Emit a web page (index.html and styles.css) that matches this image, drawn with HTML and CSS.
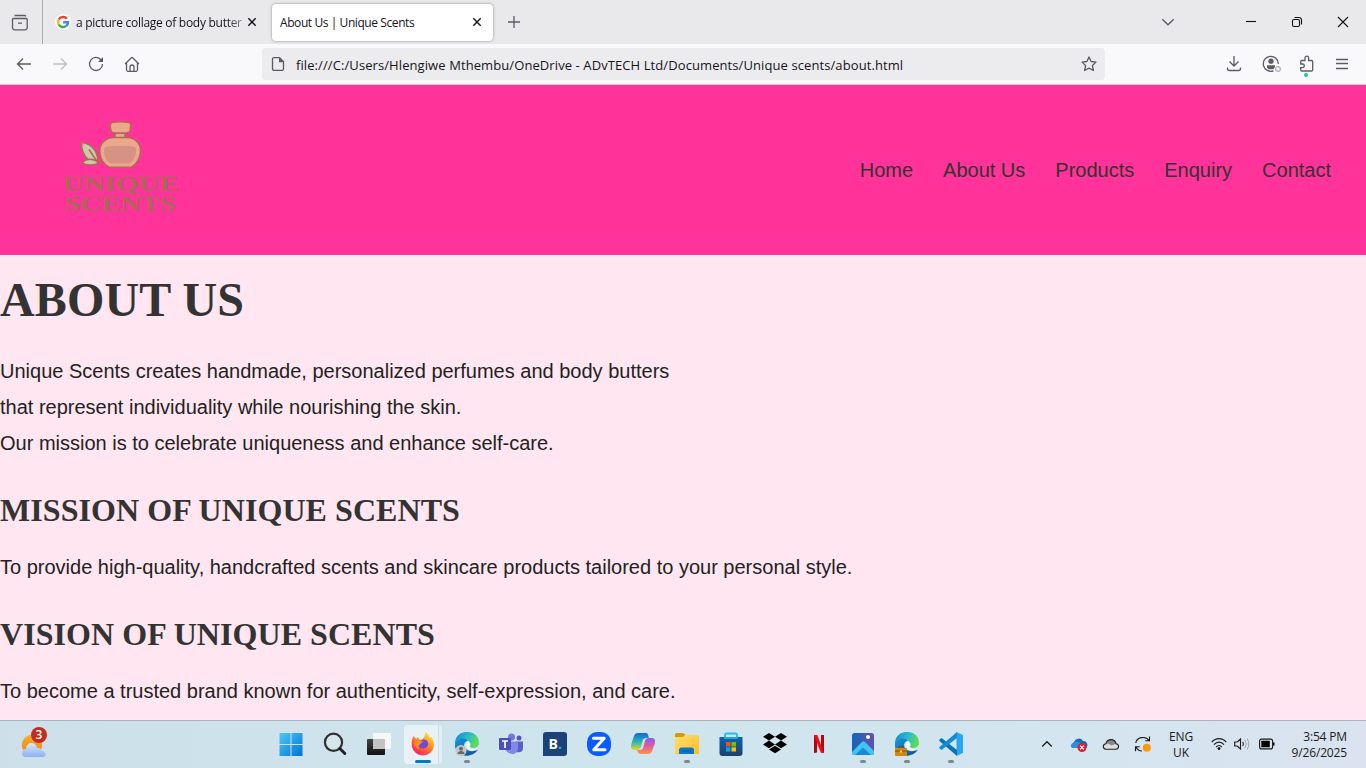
FILE: index.html
```html
<!DOCTYPE html>
<html lang="en">
<head>
<meta charset="utf-8">
<title>About Us | Unique Scents</title>
<link rel="stylesheet" href="styles.css">
</head>
<body>
<div class="screen">
  <div class="tabbar">
    <div class="recent"><svg class="ico" width="18" height="18" viewBox="0 0 18 18"><path d="M3.500 1.500h10.600l.8.900M2.500 4.500h12.700a1.100 1.100 0 0 1 1 1.100v7.900a2.200 2.200 0 0 1-2.200 2.300H3.700a2.200 2.200 0 0 1-2.200-2.300V5.600a1.100 1.100 0 0 1 1-1.100zM7 9.200h4"/></svg></div>
    <div class="tab idle">
      <svg class="fav" width="16" height="16" viewBox="0 0 16 16"><circle cx="8" cy="8" r="8" fill="#fff"/><g fill="none" stroke-width="2.500"><path d="M3.700 5.500A5 5 0 0 1 11.900 4.700" stroke="#ea4335"/><path d="M3.700 5.500a5 5 0 0 0 0 5" stroke="#fbbc05"/><path d="M3.700 10.500a5 5 0 0 0 7.600 1.400" stroke="#34a853"/><path d="M11.300 11.900A5 5 0 0 0 13 8.200H8.200" stroke="#4285f4"/></g></svg>
      <span class="tab-title faded">a picture collage of body butter</span>
      <svg class="x" width="10" height="10" viewBox="0 0 10 10"><path d="M1.300 1.300l7.400 7.400M8.700 1.300L1.300 8.700"/></svg>
    </div>
    <div class="tab active">
      <span class="tab-title">About Us | Unique Scents</span>
      <svg class="x" width="10" height="10" viewBox="0 0 10 10"><path d="M1.300 1.300l7.400 7.400M8.700 1.300L1.300 8.700"/></svg>
    </div>
    <svg class="ico plus" width="14" height="14" viewBox="0 0 14 14"><path d="M7 1v12M1 7h12"/></svg>
    <div class="winctl">
      <svg class="ico" width="14" height="14" viewBox="0 0 14 14"><path d="M1.300 4.200L7 9.800l5.700-5.600"/></svg>
      <svg class="ctl" width="12" height="12" viewBox="0 0 12 12"><path d="M1 5.500h10"/></svg>
      <svg class="ctl" width="12" height="12" viewBox="0 0 12 12"><rect x="1.500" y="3.500" width="7" height="7" rx="1.500"/><path d="M3.500 1.500H8a2.500 2.500 0 0 1 2.500 2.500v4.500"/></svg>
      <svg class="ctl" width="12" height="12" viewBox="0 0 12 12"><path d="M1 1l10 10M11 1L1 11"/></svg>
    </div>
  </div>

  <div class="toolbar">
    <div class="navbtns">
      <svg class="ico" width="16" height="16" viewBox="0 0 16 16"><path d="M15 8H1.500M7 2.500L1.500 8 7 13.500"/></svg>
      <svg class="ico off" width="16" height="16" viewBox="0 0 16 16"><path d="M1 8h13.500M9 2.500L14.500 8 9 13.500"/></svg>
      <svg class="ico" width="16" height="16" viewBox="0 0 16 16"><path d="M13.300 4.200A6.500 6.500 0 1 0 14.500 8"/><path d="M15 1v5H10z" fill="#5b5b66" stroke="none"/></svg>
      <svg class="ico" width="16" height="16" viewBox="0 0 16 16"><path d="M1 8l6.400-6.300a.9.900 0 0 1 1.200 0L15 8M2.500 7v6.800a1.500 1.500 0 0 0 1.500 1.500h8a1.500 1.500 0 0 0 1.500-1.500V7M6 15v-4a2 2 0 0 1 4 0v4"/></svg>
    </div>
    <div class="urlbar">
      <svg class="ico" width="14" height="16" viewBox="0 0 14 16"><path d="M3 1.600h5.500l4 4v7.300a1.500 1.500 0 0 1-1.500 1.500H3a1.500 1.500 0 0 1-1.500-1.500V3.100A1.500 1.500 0 0 1 3 1.600z"/><path d="M8 1.500v4.800h4.800z" fill="#5b5b66" stroke="none"/></svg>
      <span class="url">file:///C:/Users/Hlengiwe Mthembu/OneDrive - ADvTECH Ltd/Documents/Unique scents/about.html</span>
      <svg class="ico star" width="16" height="16" viewBox="0 0 16 16"><path d="M8 1l2.100 4.500 4.900.6-3.600 3.400 1 5L8 12.100l-4.400 2.400 1-5L1 6.100l4.900-.6z" stroke-linejoin="round"/></svg>
    </div>
    <div class="tools">
      <svg class="ico" width="16" height="16" viewBox="0 0 16 16"><path d="M8 0v10M3.500 5.500L8 10l4.500-4.500M1.500 11.500v1a2 2 0 0 0 2 2h9a2 2 0 0 0 2-2v-1"/></svg>
      <svg class="ico" width="20" height="18" viewBox="0 0 20 18"><path d="M11.500 15.800A7.500 7.500 0 1 1 16.300 9"/><circle cx="9" cy="6.200" r="2.600" fill="#5b5b66" stroke="none"/><path d="M5 10.200h8v1.500l-1.500 2.500H6.500L5 12.500z" fill="#5b5b66" stroke="none"/><circle cx="16" cy="14" r="2.300" stroke="#b0b0b6"/></svg>
      <svg class="ico" width="16" height="22" viewBox="0 0 16 22"><path d="M1.700 9V6.700A1.200 1.200 0 0 1 2.900 5.500H6V3a1.800 1.800 0 0 1 3.600 0v2.500h2.900a1.200 1.200 0 0 1 1.200 1.200v8.100a1.200 1.200 0 0 1-1.200 1.200H2.900a1.200 1.200 0 0 1-1.200-1.200V12.600h1.800a1.800 1.800 0 0 0 0-3.600z"/><circle cx="7" cy="21" r="0" /><circle cx="7" cy="20" r="2" fill="#20c39c" stroke="none"/></svg>
      <svg class="ico" width="14" height="14" viewBox="0 0 14 14"><path d="M1 2.500h12M1 6.500h12M1 11.500h12"/></svg>
    </div>
  </div>

  <main class="page">
    <header class="site-header">
      <svg class="logo" width="130" height="106" viewBox="0 0 130 106">
        <g stroke="#b06a52" stroke-width="1.500">
          <path d="M41 43.500C30 42 24 34 24.800 22.500 35 24 41 31 41 43.500z" fill="#cbc8ae"/>
          <path d="M25 42.500c5-4.500 12-4 17 .3-5 3-13 3-17-.3z" fill="#cbc8ae"/>
          <path d="M32 29.500l9 13.500 3 0" fill="none"/>
          <path d="M58 13h10v6H58z" fill="#eca88d"/>
          <path d="M55 2.500c6-1 11-1 17 0 1.500.5 2 2 1.600 4L73 11c-.5 1.500-2 2-4 2H58c-2 0-3.500-.5-4-2L53.300 6.500c-.3-2 .2-3.500 1.700-4z" fill="#eca88d"/>
          <path d="M57 17.500h13c8 0 14 6 13.500 14C83 40 77 47.300 72 47.300H54.500C49 47.300 43 40 42.700 31.500c-.2-8 6-14 14.300-14z" fill="#eca88d"/>
        </g>
        <path d="M50 26.500q13-1.500 26 0 3.500.5 3 5C78.500 38 75 43.500 71 43.500H55.500C51 43.500 47.500 38 47 31.500q-.2-4.500 3-5z" fill="#d69282"/>
        <g class="logo-text"><text x="6" y="70.500" textLength="116" lengthAdjust="spacingAndGlyphs">UNIQUE</text><text x="8" y="91" textLength="111" lengthAdjust="spacingAndGlyphs">SCENTS</text></g>
      </svg>
      <nav class="site-nav"><a>Home</a><a>About Us</a><a>Products</a><a>Enquiry</a><a>Contact</a></nav>
    </header>
    <h1>ABOUT US</h1>
    <p>Unique Scents creates handmade, personalized perfumes and body butters<br>that represent individuality while nourishing the skin.<br>Our mission is to celebrate uniqueness and enhance self-care.</p>
    <h2>MISSION OF UNIQUE SCENTS</h2>
    <p>To provide high-quality, handcrafted scents and skincare products tailored to your personal style.</p>
    <h2>VISION OF UNIQUE SCENTS</h2>
    <p>To become a trusted brand known for authenticity, self-expression, and care.</p>
  </main>

  <footer class="taskbar">
    <svg width="0" height="0" class="defs"><defs>
      <linearGradient id="win" x2="1" y2="1"><stop stop-color="#4cc9fb"/><stop offset="1" stop-color="#0073d1"/></linearGradient>
      <linearGradient id="sun" x2="0" y2="1"><stop stop-color="#eab32a"/><stop offset="1" stop-color="#f77b16"/></linearGradient>
      <linearGradient id="cloud" x2="0" y2="1"><stop stop-color="#d8e7fc"/><stop offset="1" stop-color="#8db2ee"/></linearGradient>
      <linearGradient id="fox" x1=".8" y1="0" x2=".2" y2="1"><stop stop-color="#fff044"/><stop offset=".45" stop-color="#ff8a22"/><stop offset="1" stop-color="#f5156c"/></linearGradient>
      <linearGradient id="edge" x2="1" y2=".3"><stop stop-color="#1686d0"/><stop offset=".55" stop-color="#28b9d0"/><stop offset="1" stop-color="#5ddd56"/></linearGradient>
      <linearGradient id="edge2" x2="1" y2="1"><stop stop-color="#1796dc"/><stop offset="1" stop-color="#0b4b98"/></linearGradient>
      <linearGradient id="cop1" x2="0" y2="1"><stop stop-color="#1765d8"/><stop offset=".5" stop-color="#25b5bb"/><stop offset="1" stop-color="#e6d527"/></linearGradient>
      <linearGradient id="cop2" x2="0" y2="1"><stop stop-color="#8c59ee"/><stop offset=".5" stop-color="#e35aa0"/><stop offset="1" stop-color="#ff9248"/></linearGradient>
      <linearGradient id="fold" x2="1" y2="1"><stop stop-color="#ffdf72"/><stop offset="1" stop-color="#fdbd22"/></linearGradient>
      <linearGradient id="store" x2="0" y2="1"><stop stop-color="#0868ad"/><stop offset="1" stop-color="#213e69"/></linearGradient>
      <linearGradient id="photo" x2="1"><stop stop-color="#1365b8"/><stop offset="1" stop-color="#654fb2"/></linearGradient>
      <linearGradient id="dark" x2="0" y2="1"><stop stop-color="#444"/><stop offset="1" stop-color="#111"/></linearGradient>
    </defs></svg>
    <div class="weather"><svg width="30" height="36" viewBox="0 0 30 36"><circle cx="12" cy="20" r="10.200" fill="url(#sun)"/><path d="M6 32a3.500 3.500 0 0 1 0-8 5.500 5.500 0 0 1 11-1 4 4 0 0 1 5 3 3 3 0 0 1 1 6z" fill="url(#cloud)"/><circle cx="19" cy="10" r="8" fill="#c42b1c"/><text x="19" y="14.200" text-anchor="middle" class="badge">3</text></svg></div>
    <div class="apps">
      <span class="app"><svg viewBox="0 0 24 24"><path fill="url(#win)" d="M.5 1h11v11H.5zM12.500 1h11v11h-11zM.5 13h11v11H.5zM12.500 13h11v11h-11z"/></svg></span>
      <span class="app"><svg viewBox="0 0 24 24"><circle cx="10.500" cy="10.300" r="8.600" fill="#dce9ed" fill-opacity=".5" stroke="#303030" stroke-width="2.200"/><path d="M16.800 16.500l5 5" stroke="#222" stroke-width="3" stroke-linecap="round"/></svg></span>
      <span class="app"><svg viewBox="0 0 24 24"><rect y="7" width="18" height="16" rx="1" fill="url(#dark)"/><rect x="6" y="1" width="18" height="16" rx="1" fill="#f7f7f7"/><path d="M6 7h12v10H6z" fill="#c3c3c3"/></svg></span>
      <span class="app current"><svg viewBox="0 0 24 24"><path d="M2.500 4l2.700 3 2-2 .6 2.500 3 .3C13 6 14 3.500 14.500 0c3 2 4 4 4.300 6l1.700-1c3 5 3.300 9.500.7 13.500-4.500 6.500-14 6.500-18.500 0C-.5 14 .5 8 2.500 4z" fill="url(#fox)"/><path d="M8 9l4-1.500c4-.5 6 3 4.800 6-1.500 4-8 4-9.300 0-.5-2 0-3.500.5-4.500z" fill="#704bd1"/><path d="M4 8l4-.5 4 2.200-3 2.600c-1.500 1-2 3-.8 5C4 16 2.500 12 4 8z" fill="#ff8b20"/></svg></span>
      <span class="app run"><svg viewBox="0 0 24 24"><path d="M0 12C-.5-4 24-4 24 11c0 5-6 6-9 4 2-3-1-7-5-7-5 0-9 4-9 9-1-1-1-3-1-5z" fill="url(#edge)"/><path d="M0 12c1-5 9-8 13-3-5 0-6 8 2 10 3 .8 6-.4 8-1.500C17 27 0 26 0 12z" fill="url(#edge2)"/><path d="M13 9c2.500 2 2 5 1 6.500 2 2 6 2 8.500 0 0 2-6 4-9 2-2.500-2-3-6-.5-8.500z" fill="#eef8f8"/><circle cx="6" cy="18.500" r="5.500" fill="#c7c7c5"/><circle cx="6" cy="16.700" r="2" fill="#686868"/><path d="M2.500 22c0-4 7-4 7 0z" fill="#686868"/></svg></span>
      <span class="app"><svg viewBox="0 0 24 24"><circle cx="12.500" cy="5" r="3.500" fill="#7278dc"/><circle cx="20" cy="6" r="2.500" fill="#5558bd"/><path d="M17 9.500h7V16c0 4-3 5-7 4z" fill="#5b5fc7"/><path d="M6 9.500h13V16c0 8-11 8-13 0z" fill="#8287ea"/><rect y="6" width="12" height="12" rx="1" fill="#4b4fbc"/><path d="M3 9h6M6 9v7" stroke="#fff" stroke-width="1.700"/></svg></span>
      <span class="app"><svg viewBox="0 0 24 24"><path d="M3 0h18q3 0 3 3v18q0 3-3 3H0V3q0-3 3-3z" fill="#1b4379"/><text x="5.500" y="17.300" class="book">B<tspan fill="#1fb4e8">.</tspan></text></svg></span>
      <span class="app"><svg viewBox="0 0 24 24"><rect width="24" height="24" rx="10" fill="#0b5cff"/><path d="M6.500 6.200h10.700L6.800 17.800H18" fill="none" stroke="#fff" stroke-width="3" stroke-linecap="round" stroke-linejoin="round"/></svg></span>
      <span class="app"><svg viewBox="0 0 24 24"><path d="M7 1h8c2 0 2 2 3 5h-3c-2 0-3 1-3.600 4l-1.400 5c-.5 2-2 3-4 3H3c-3 0-3.500-3-2.700-6L3 4c.7-2 2-3 4-3z" fill="url(#cop1)"/><path d="M17 22H9.500c-2 0-2.500-2-3.500-4h3c2 0 3-1 3.600-4L14 9c.5-2 1.500-3 4-3h3c3 0 3.500 3 2.700 6L21 19c-.7 2-2 3-4 3z" fill="url(#cop2)"/></svg></span>
      <span class="app run"><svg viewBox="0 0 24 24"><path d="M0 3q0-2 2-2h6l3 2v4H0z" fill="#d99a08"/><path d="M0 5h8l2-2h12q2 0 2 2v17H0z" fill="url(#fold)"/><path d="M4 22v-4q0-2.500 2.500-2.500h10Q19 15.500 19 18v4z" fill="#0877c5"/><path d="M7 19h9" stroke="#075b9c"/></svg></span>
      <span class="app"><svg viewBox="0 0 24 24"><path d="M6 7V3q0-1.500 1.500-1.500h9Q18 1.500 18 3v4" fill="none" stroke="#29b8ef" stroke-width="1.800"/><path d="M.5 5h23v16q0 3-3 3h-17q-3 0-3-3z" fill="url(#store)"/><path d="M6 3v3h12V3" fill="none" stroke="#29b8ef" stroke-width="1.500"/><path d="M7 10h4.500v4.500H7z" fill="#f25022"/><path d="M12.500 10H17v4.500h-4.500z" fill="#7fba00"/><path d="M7 15.300h4.500v4.200H7z" fill="#00a4ef"/><path d="M12.500 15.300H17v4.200h-4.500z" fill="#ffb900"/></svg></span>
      <span class="app"><svg viewBox="0 0 24 24"><path d="M6 1l6 3.800-6 3.800L0 4.800zM18 1l6 3.800-6 3.800-6-3.800zM6 8.600l6 3.800-6 3.800-6-3.800zM18 8.600l6 3.800-6 3.800-6-3.800zM12 13.800l6 3.700-6 3.700-6-3.700z" fill="#000"/></svg></span>
      <span class="app"><svg viewBox="0 0 24 24"><path d="M7 3h3v17.500l-3 .5zM14 3h3v18l-3-.5z" fill="#b1060f"/><path d="M7 3h3.300L17 21l-3.300-.4z" fill="#ef0a18"/></svg></span>
      <span class="app run"><svg viewBox="0 0 24 24"><rect x="1" y="1" width="22" height="22" rx="2.500" fill="url(#photo)"/><path d="M1 20L11 10q1.500-1.500 3 0l9 9v2q0 2-2 2H3q-2 0-2-2z" fill="#42c3f5"/><path d="M4 23l8-7.500L20 23z" fill="#168bd2"/><circle cx="17" cy="5" r="2" fill="#fff"/></svg></span>
      <span class="app run"><svg viewBox="0 0 24 24"><path d="M0 12C-.5-4 24-4 24 11c0 5-6 6-9 4 2-3-1-7-5-7-5 0-9 4-9 9-1-1-1-3-1-5z" fill="url(#edge)"/><path d="M0 12c1-5 9-8 13-3-5 0-6 8 2 10 3 .8 6-.4 8-1.500C17 27 0 26 0 12z" fill="url(#edge2)"/><path d="M13 9c2.500 2 2 5 1 6.500 2 2 6 2 8.500 0 0 2-6 4-9 2-2.500-2-3-6-.5-8.500z" fill="#eef8f8"/><path d="M4 16v-1.500h4V16" fill="none" stroke="#7c4608"/><rect y="16" width="12" height="8" rx="1" fill="#d58512"/><path d="M0 19h12" stroke="#8a4b05"/><path d="M5 18.500h2v2H5z" fill="#ffd44d"/></svg></span>
      <span class="app run"><svg viewBox="0 0 24 24"><path d="M17.500 0L24 3v18l-6.500 3z" fill="#29a6f2"/><path d="M0 8l2.500-2L18 18v6L1 9.500z" fill="#0873b9"/><path d="M0 16l2.500 2L18 6V0L1 14.500z" fill="#168bd3"/></svg></span>
    </div>
    <div class="tray">
      <svg class="t-up" width="12" height="12" viewBox="0 0 12 12"><path d="M1.200 8.500L6 3.700l4.800 4.800" fill="none" stroke="#1b1b1b" stroke-width="1.300"/></svg>
      <svg class="t-drive" width="18" height="16" viewBox="0 0 18 16"><path d="M4 11a3.500 3.500 0 0 1 0-6 5 5 0 0 1 9-1 4 4 0 0 1 3 7z" fill="#1268bf"/><path d="M2 11c-2-2-1-5 2-5 2-2 5-2 6.500 1L14 11z" fill="#2491e4"/><circle cx="12" cy="10.500" r="4.500" fill="#d92334"/><path d="M10.200 8.700l3.600 3.600m0-3.600l-3.600 3.600" stroke="#fff" stroke-width="1.200"/></svg>
      <svg class="t-cloud" width="18" height="14" viewBox="0 0 18 14"><path d="M4 12.300C.5 12 .3 7 4 6.700c1-5.500 9-5.500 10 0 3.500.3 3.300 5.300 0 5.600z" fill="#dedede"/><path d="M4 6.700c1-5.500 9-5.500 10 0L9.500 8.500 6 6.500z" fill="#888"/><path d="M4 12.300C.5 12 .3 7 4 6.700c1-5.500 9-5.500 10 0 3.500.3 3.300 5.300 0 5.600z" fill="none" stroke="#222" stroke-width="1.100"/></svg>
      <svg class="t-sync" width="18" height="18" viewBox="0 0 18 18"><path d="M1.800 8C2.500 2 11.500.5 15 5.500M15.500 1.500v4.300h-4.300M1.500 16.200v-4.500h4.300M2 12q2 4 6 4" fill="none" stroke="#1b1b1b" stroke-width="1.100"/><circle cx="12.800" cy="12.800" r="4" fill="#ff980e"/></svg>
      <div class="lang">ENG<br>UK</div>
      <svg class="t-wifi" width="16" height="14" viewBox="0 0 16 14"><path d="M.8 5.200c4-4.700 10.400-4.700 14.400 0M3 7.700c3-3.500 7-3.500 10 0M5.200 10c1.800-2 3.800-2 5.600 0" fill="none" stroke="#1b1b1b" stroke-width="1.200"/><circle cx="8" cy="11.600" r="1.400"/></svg>
      <svg class="t-sound" width="16" height="14" viewBox="0 0 16 14"><path d="M.7 5h2.500L6.500 2v10L3.200 9H.7zM8.700 5q1.500 2 0 4" fill="none" stroke="#1b1b1b" stroke-width="1.100"/><path d="M10.800 3q3 4 0 8M13 1.500q3.700 5.500 0 11" fill="none" stroke="#9ca9b1"/></svg>
      <svg class="t-bat" width="16" height="12" viewBox="0 0 16 12"><rect x=".6" y="1.100" width="13" height="9.800" rx="2" fill="none" stroke="#1b1b1b" stroke-width="1.100"/><rect x="2.300" y="2.800" width="8.500" height="6.400" rx=".5"/><path d="M14 4.500h1.500v3H14z"/></svg>
      <div class="clock">3:54 PM<br>9/26/2025</div>
    </div>
  </footer>
</div>
</body>
</html>
```
FILE: styles.css
```css
* { box-sizing: border-box; }
body { margin: 0; }
svg { display: block; flex: none; }
.screen { width: 1366px; height: 768px; display: flex; flex-direction: column; overflow: hidden; font-family: "Open Sans", "Noto Sans", sans-serif; }
.ico { fill: none; stroke: #5b5b66; stroke-width: 1.3; }
.ico.off { stroke: #bdbdc3; }

.tabbar { height: 44px; flex: none; background: #e9e9eb; display: flex; align-items: center; }
.recent { width: 43px; height: 44px; border-right: 1px solid #aaaaad; padding: 14px 0 0 11px; }
.tab { height: 37px; display: flex; align-items: center; font-size: 12px; color: #15141a; }
.idle { width: 226px; padding: 0 12px 0 12px; margin-right: 3px; }
.fav { margin-right: 5px; }
.active { width: 221px; padding: 0 11px 0 8px; background: #fff; border-radius: 4px; box-shadow: 0 0 3px rgba(0,0,0,.4); }
.tab-title { white-space: nowrap; letter-spacing: -.42px; flex: 1; padding-top: 1px; }
.faded { letter-spacing: -.28px; -webkit-mask-image: linear-gradient(to right, #000 88%, rgba(0,0,0,.3)); mask-image: linear-gradient(to right, #000 88%, rgba(0,0,0,.3)); }
.x { fill: none; stroke: #15141a; stroke-width: 1.4; }
.plus { margin-left: 14px; }
.winctl { margin-left: auto; display: flex; align-items: center; padding-right: 17px; }
.winctl .ico { margin-right: 70px; }
.ctl { fill: none; stroke: #111; stroke-width: 1.1; margin-left: 34px; }
.winctl .ico + .ctl { margin-left: 0; }

.toolbar { height: 41px; flex: none; background: #f9f9fb; border-bottom: 1px solid #ccccd1; display: flex; align-items: center; }
.navbtns { width: 262px; display: flex; gap: 20px; padding-left: 16px; }
.urlbar { width: 843px; height: 32px; background: #ececee; border-radius: 4px; display: flex; align-items: center; padding: 0 8px 0 9px; }
.url { margin-left: 11px; flex: 1; font-size: 13px; letter-spacing: .09px; white-space: nowrap; color: #15141a; padding-top: 1px; }
.tools { display: flex; align-items: center; padding-left: 121px; }
.tools svg:nth-child(2) { margin-left: 20px; }
.tools svg:nth-child(3) { margin: 4px 0 0 17px; }
.tools svg:nth-child(4) { margin-left: 20px; }

.page { height: 635px; flex: none; overflow: hidden; background: #ffe6f0; color: #222; font: 20px/36px "Liberation Sans", Arial, sans-serif; }
.site-header { height: 170px; background: #ff3399; display: flex; align-items: center; justify-content: space-between; padding: 0 35px 0 57px; }
.logo { margin-bottom: -6px; }
.logo-text { font: bold 22px "Liberation Serif", serif; fill: #ad6658; }
.site-nav { display: flex; gap: 30px; color: #333; }
h1, h2 { font-family: "Liberation Serif", "Times New Roman", serif; color: #333; line-height: 1.8; }
h1 { margin: 0 0 10px; padding-top: 2px; font-size: 48px; letter-spacing: .12px; }
h2 { margin: 21px 0 9px; font-size: 32px; letter-spacing: .06px; }
p { margin: 0; }

.taskbar { height: 48px; flex: none; background: linear-gradient(90deg, #cde0ea, #cee5ed 45%, #d3e5ef 75%, #dae3ef); border-top: 1px solid #a9b4be; display: flex; }
.defs { position: absolute; }
.weather { width: 269px; padding: 4px 0 0 20px; }
.badge { font: 600 12px "Open Sans", sans-serif; fill: #fff; }
.apps { display: flex; }
.app { width: 44px; height: 47px; display: flex; flex-direction: column; align-items: center; padding-top: 11px; }
.app svg { width: 24px; height: 24px; }
.run::after { content: ""; width: 6px; height: 3px; border-radius: 2px; background: #7d888e; margin-top: 4px; }
.current { width: 38px; height: 39px; margin: 4px 3px; padding-top: 7px; border-radius: 4px; background: linear-gradient(90deg, #e8f1f5 34px, #cfdde4 34px, #cfdde4 35px, #e4eff4 35px); }
.current::after { content: ""; width: 16px; height: 3px; border-radius: 2px; background: #0078d4; margin-top: 4px; }
.book { font: bold 14px "Open Sans", sans-serif; fill: #fff; }
.tray { flex: 1; display: flex; align-items: center; padding: 0 19px 0 68px; color: #1b1b1b; font-size: 12px; line-height: 16px; letter-spacing: -.15px; }
.tray > svg { margin-top: -2px; }
.tray > .t-drive { margin: 0 0 0 17px; }
.t-cloud { margin-left: 14px; }
.t-sync { margin-left: 14px; }
.lang { width: 30px; margin-left: 14px; text-align: center; }
.t-wifi { margin-left: 15px; }
.t-sound { margin-left: 7px; }
.t-bat { margin-left: 9px; }
.clock { margin-left: auto; text-align: right; white-space: nowrap; }
```
